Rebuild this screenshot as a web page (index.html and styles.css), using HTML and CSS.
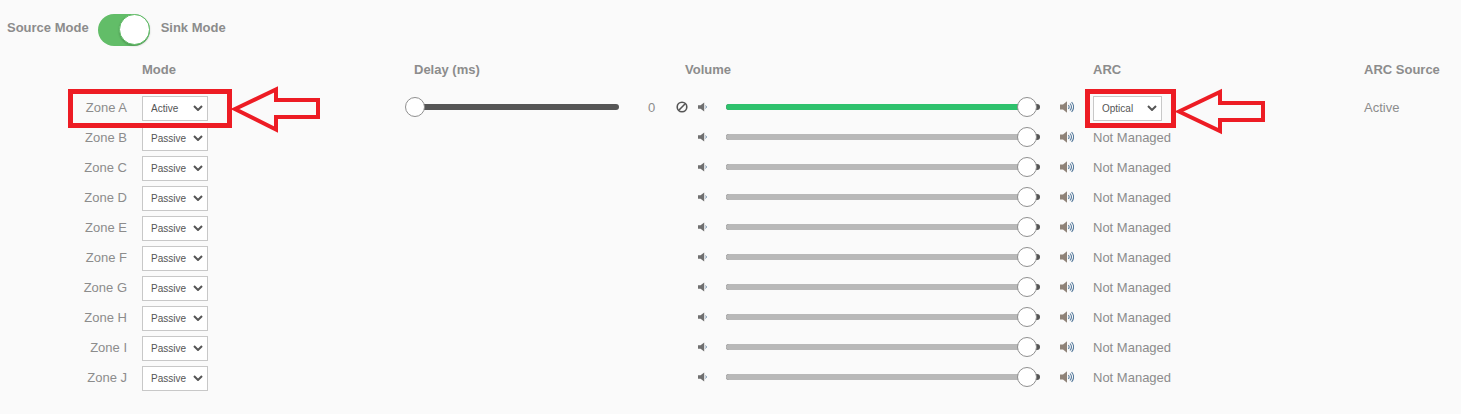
FILE: index.html
```html
<!DOCTYPE html>
<html lang="en">
<head>
<meta charset="UTF-8">
<meta name="viewport" content="width=device-width, initial-scale=1.0">
<title>Zone Settings</title>
<link rel="stylesheet" href="styles.css">
</head>
<body>

<svg class="icon-defs" width="0" height="0">
  <symbol id="vol-low" viewBox="0 0 10 10">
    <path d="M0 3.200h2.600L6.200 .6v8.800L2.600 6.800H0z" fill="#6f6f6f"/>
    <path d="M7.600 3.600c.9.8.9 2 0 2.800" fill="none" stroke="#5b7fa0" stroke-width="1"/>
  </symbol>
  <symbol id="vol-high" viewBox="0 0 14 14">
    <path d="M0 4.600h3L7 1.200v11.600L3 9.400H0z" fill="#8f8379"/>
    <path d="M8.400 5c.9 1.200.9 2.800 0 4M10 3.500c1.700 2 1.700 5 0 7M11.600 2c2.400 3 2.400 7 0 10" fill="none" stroke="#567a9c" stroke-width="1.100"/>
  </symbol>
</svg>

<div class="mode-bar">
  <span class="mode-label">Source Mode</span>
  <div class="toggle"><div class="toggle-knob"></div></div>
  <span class="mode-label">Sink Mode</span>
</div>

<div class="zones">
  <div class="row head">
    <div></div>
    <div>Mode</div>
    <div class="head-delay">Delay (ms)</div>
    <div class="head-volume">Volume</div>
    <div>ARC</div>
    <div>ARC Source</div>
  </div>

  <div class="row">
    <div class="zone-name">Zone A</div>
    <div><select class="pick"><option>Active</option><option>Passive</option></select></div>
    <div class="delay">
      <div class="slider delay-slider"><div class="thumb"></div></div>
      <span class="delay-value">0</span>
    </div>
    <div class="volume">
      <svg class="ban" viewBox="0 0 12 12"><circle cx="6" cy="6" r="4.800"/><path d="M2.800 9.200l6.400-6.400"/></svg>
      <svg class="vol-low"><use href="#vol-low"/></svg>
      <div class="slider"><div class="fill on"></div><div class="thumb"></div></div>
      <svg class="vol-high"><use href="#vol-high"/></svg>
    </div>
    <div><select class="pick wide"><option>Optical</option><option>HDMI</option></select></div>
    <div>Active</div>
  </div>

  <div class="row">
    <div class="zone-name">Zone B</div>
    <div><select class="pick"><option>Passive</option><option>Active</option></select></div>
    <div></div>
    <div class="volume">
      <span class="ban-space"></span>
      <svg class="vol-low"><use href="#vol-low"/></svg>
      <div class="slider"><div class="fill"></div><div class="thumb"></div></div>
      <svg class="vol-high"><use href="#vol-high"/></svg>
    </div>
    <div>Not Managed</div>
    <div></div>
  </div>

  <div class="row">
    <div class="zone-name">Zone C</div>
    <div><select class="pick"><option>Passive</option><option>Active</option></select></div>
    <div></div>
    <div class="volume">
      <span class="ban-space"></span>
      <svg class="vol-low"><use href="#vol-low"/></svg>
      <div class="slider"><div class="fill"></div><div class="thumb"></div></div>
      <svg class="vol-high"><use href="#vol-high"/></svg>
    </div>
    <div>Not Managed</div>
    <div></div>
  </div>

  <div class="row">
    <div class="zone-name">Zone D</div>
    <div><select class="pick"><option>Passive</option><option>Active</option></select></div>
    <div></div>
    <div class="volume">
      <span class="ban-space"></span>
      <svg class="vol-low"><use href="#vol-low"/></svg>
      <div class="slider"><div class="fill"></div><div class="thumb"></div></div>
      <svg class="vol-high"><use href="#vol-high"/></svg>
    </div>
    <div>Not Managed</div>
    <div></div>
  </div>

  <div class="row">
    <div class="zone-name">Zone E</div>
    <div><select class="pick"><option>Passive</option><option>Active</option></select></div>
    <div></div>
    <div class="volume">
      <span class="ban-space"></span>
      <svg class="vol-low"><use href="#vol-low"/></svg>
      <div class="slider"><div class="fill"></div><div class="thumb"></div></div>
      <svg class="vol-high"><use href="#vol-high"/></svg>
    </div>
    <div>Not Managed</div>
    <div></div>
  </div>

  <div class="row">
    <div class="zone-name">Zone F</div>
    <div><select class="pick"><option>Passive</option><option>Active</option></select></div>
    <div></div>
    <div class="volume">
      <span class="ban-space"></span>
      <svg class="vol-low"><use href="#vol-low"/></svg>
      <div class="slider"><div class="fill"></div><div class="thumb"></div></div>
      <svg class="vol-high"><use href="#vol-high"/></svg>
    </div>
    <div>Not Managed</div>
    <div></div>
  </div>

  <div class="row">
    <div class="zone-name">Zone G</div>
    <div><select class="pick"><option>Passive</option><option>Active</option></select></div>
    <div></div>
    <div class="volume">
      <span class="ban-space"></span>
      <svg class="vol-low"><use href="#vol-low"/></svg>
      <div class="slider"><div class="fill"></div><div class="thumb"></div></div>
      <svg class="vol-high"><use href="#vol-high"/></svg>
    </div>
    <div>Not Managed</div>
    <div></div>
  </div>

  <div class="row">
    <div class="zone-name">Zone H</div>
    <div><select class="pick"><option>Passive</option><option>Active</option></select></div>
    <div></div>
    <div class="volume">
      <span class="ban-space"></span>
      <svg class="vol-low"><use href="#vol-low"/></svg>
      <div class="slider"><div class="fill"></div><div class="thumb"></div></div>
      <svg class="vol-high"><use href="#vol-high"/></svg>
    </div>
    <div>Not Managed</div>
    <div></div>
  </div>

  <div class="row">
    <div class="zone-name">Zone I</div>
    <div><select class="pick"><option>Passive</option><option>Active</option></select></div>
    <div></div>
    <div class="volume">
      <span class="ban-space"></span>
      <svg class="vol-low"><use href="#vol-low"/></svg>
      <div class="slider"><div class="fill"></div><div class="thumb"></div></div>
      <svg class="vol-high"><use href="#vol-high"/></svg>
    </div>
    <div>Not Managed</div>
    <div></div>
  </div>

  <div class="row">
    <div class="zone-name">Zone J</div>
    <div><select class="pick"><option>Passive</option><option>Active</option></select></div>
    <div></div>
    <div class="volume">
      <span class="ban-space"></span>
      <svg class="vol-low"><use href="#vol-low"/></svg>
      <div class="slider"><div class="fill"></div><div class="thumb"></div></div>
      <svg class="vol-high"><use href="#vol-high"/></svg>
    </div>
    <div>Not Managed</div>
    <div></div>
  </div>
</div>

<!-- red callouts drawn on top of the screenshot -->
<svg class="callouts" width="1461" height="414" viewBox="0 0 1461 414">
  <rect x="70.500" y="91.500" width="159" height="34"/>
  <path d="M235 109L276 89.500V100H318V117H276V129.500z"/>
  <rect x="1087.500" y="91.500" width="86" height="34"/>
  <path d="M1179 111.500L1220 92V103H1263V120H1220V131z"/>
</svg>

</body>
</html>
```

FILE: styles.css
```css
body {
  font-family: "Liberation Sans", Arial, sans-serif;
  font-size: 13px;
  color: #8c8c8c;
  background: #fafafa;
  margin: 0;
  position: relative;
  height: 414px;
  overflow: hidden;
}
.icon-defs { display: block; }

/* source / sink switch */
.mode-bar {
  display: flex;
  align-items: center;
  gap: 10px;
  height: 32px;
  padding: 14px 0 0 7px;
}
.mode-label {
  font-weight: bold;
  padding-bottom: 5px;
}
.mode-label:first-child { margin-right: -1px; }
.mode-label:last-child { margin-left: 1px; }
.toggle {
  width: 52px;
  height: 32px;
  box-sizing: border-box;
  border-radius: 16px;
  background: #62bd68;
  display: flex;
  justify-content: flex-end;
}
.toggle-knob {
  width: 31px;
  height: 31px;
  border-radius: 50%;
  background: #fff;
  border: 1px solid #62bd68;
  box-sizing: border-box;
  box-shadow: 0 1px 2px rgba(0,0,0,0.2);
}

/* zone table */
.zones { margin-top: 8px; }
.row {
  display: grid;
  grid-template-columns: 142px 263px 271px 417px 271px 1fr;
  align-items: center;
  height: 30px;
}
.head {
  font-weight: bold;
  margin-bottom: 8px;
}
.head-delay { padding-left: 9px; }
.head-volume { padding-left: 9px; }
.zone-name {
  text-align: right;
  padding-right: 15px;
}

select.pick {
  display: block;
  appearance: none;
  width: 66px;
  height: 25px;
  margin-top: 2px;
  font-family: "Liberation Sans", Arial, sans-serif;
  font-size: 10px;
  color: #555;
  background: #fff url("data:image/svg+xml,%3Csvg xmlns='http://www.w3.org/2000/svg' viewBox='0 0 10 6'%3E%3Cpath d='M1 1l4 4 4-4' fill='none' stroke='%23555' stroke-width='2'/%3E%3C/svg%3E") no-repeat right 4px center / 10px 6px;
  border: 1px solid #c8c8c8;
  border-radius: 0;
  padding: 0 0 0 8px;
}
select.wide { width: 69px; }

/* sliders */
.delay { display: flex; align-items: center; }
.delay-value { margin-left: 29px; }
.slider {
  position: relative;
  width: 314px;
  height: 6px;
  background: #555;
  border-radius: 3px;
}
.delay-slider {
  width: 204px;
  margin-left: 10px;
}
.fill {
  height: 100%;
  width: 301px;
  border-radius: 3px 0 0 3px;
  background: #b8b8b8;
}
.fill.on { background: #2ec16c; }
.thumb {
  position: absolute;
  top: -7px;
  left: 291px;
  width: 20px;
  height: 20px;
  box-sizing: border-box;
  border-radius: 50%;
  background: #fff;
  border: 1px solid #8f8f8f;
}
.delay-slider .thumb { left: -10px; }

.volume {
  display: flex;
  align-items: center;
}
.ban, .ban-space {
  width: 12px;
  height: 12px;
  margin-right: 10px;
  flex: none;
}
.ban { fill: none; stroke: #555; stroke-width: 1.6; }
.vol-low {
  width: 10px;
  height: 10px;
  margin-right: 18px;
  flex: none;
}
.vol-high {
  width: 14px;
  height: 14px;
  margin-left: 20px;
  flex: none;
}

/* annotations */
.callouts {
  position: absolute;
  top: 0;
  left: 0;
  fill: none;
  stroke: #ed1c24;
  stroke-width: 5;
}
.callouts path { stroke-width: 4; }
```
